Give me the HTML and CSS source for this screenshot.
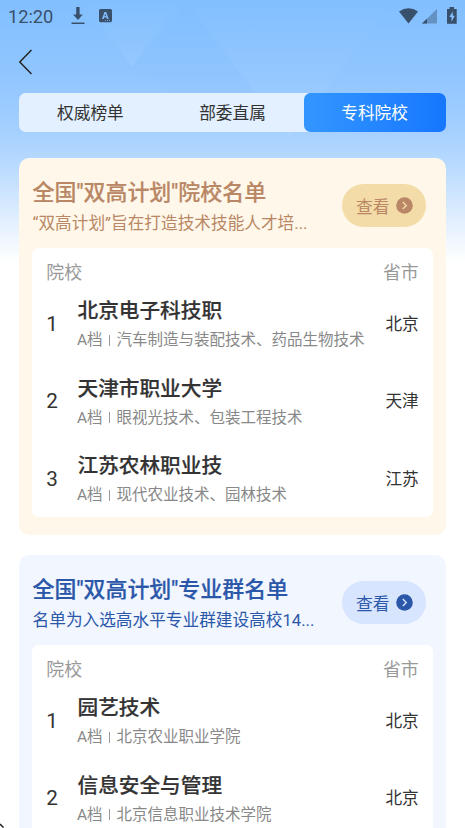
FILE: index.html
```html
<!DOCTYPE html>
<html lang="zh-CN">
<head>
<meta charset="utf-8">
<title>院校名单</title>
<link rel="stylesheet" href="styles.css">
</head>
<body>
<svg class="backdrop" width="465" height="262" viewBox="0 0 465 262" aria-hidden="true">
  <defs>
    <linearGradient id="sky" x1="0" y1="0" x2="0" y2="1">
      <stop offset="0" stop-color="#82bfff"/>
      <stop offset=".3" stop-color="#91c6ff"/>
      <stop offset=".5" stop-color="#a5d0ff"/>
      <stop offset=".65" stop-color="#bcdcff"/>
      <stop offset=".85" stop-color="#e3f0ff"/>
      <stop offset="1" stop-color="#fff"/>
    </linearGradient>
    <linearGradient id="peak" x1="0" y1="0" x2="0" y2="1">
      <stop offset="0" stop-color="#fff" stop-opacity="0"/>
      <stop offset="1" stop-color="#fff" stop-opacity=".06"/>
    </linearGradient>
    <linearGradient id="ridge" x1="0" y1="0" x2="0" y2="1">
      <stop offset="0" stop-color="#63a6f2" stop-opacity=".06"/>
      <stop offset="1" stop-color="#63a6f2" stop-opacity="0"/>
    </linearGradient>
  </defs>
  <rect width="465" height="262" fill="url(#sky)"/>
  <path d="M84 0H180L132 67Z" fill="url(#peak)"/>
  <path d="M187 3L289 137L240 137L132 67Z" fill="url(#ridge)"/>
  <path d="M187 3L289 137L393 0H187Z" fill="url(#peak)"/>
</svg>
<div class="page">
  <header class="status">
    <span class="clock">12:20</span>
    <svg class="download" width="14" height="18" viewBox="0 0 14 18"><path d="M5.2 0h3.400v7.500h3.200L7 13 2.100 7.500h3.100zM.5 15.500h13V17H.5z"/></svg>
    <svg class="app" width="13" height="14" viewBox="0 0 13 14"><path fill-rule="evenodd" d="M1.500 0h10Q13 0 13 1.500v10Q13 13.200 11.500 13.200h-10Q0 13.200 0 11.500v-10Q0 0 1.500 0zM5.500 3L3 10h1.600l.5-1.500h2.500L8.100 10h1.600L7.200 3zM5.500 7.200l.85-2.600.85 2.600zM6 11.200v.7h1v-.7zm2 0v.7h1v-.7zm2 0v.7h1v-.7z"/></svg>
    <svg class="signals" width="60" height="18" viewBox="0 0 60 18">
      <path d="M0 4.500Q9.500-2 19 4.500L9.500 16.500z"/>
      <path d="M38 2V16.500H23z" opacity=".42"/>
      <path d="M28 11.700V16.500H23z"/>
      <path fill-rule="evenodd" d="M50.500 0h4.500v2h2.700V16.800H48V2h2.500zM53.800 4.500L50.300 10h2.200v4.700l3.300-6h-2z"/>
    </svg>
  </header>
  <nav class="navbar"><svg width="14" height="26" viewBox="0 0 14 26"><path d="M12.500 1L.8 13L12.500 25"/></svg></nav>
  <div class="tabs"><span class="tab">权威榜单</span><span class="tab">部委直属</span><span class="tab active">专科院校</span></div>
  <main class="cards">
    <section class="card gold">
      <div class="head">
        <div class="intro"><h2>全国"双高计划"院校名单</h2><p>“双高计划”旨在打造技术技能人才培...</p></div>
        <a class="more">查看<svg width="17" height="17" viewBox="0 0 17 17"><circle cx="8.500" cy="8.500" r="8.300"/><path d="M6.800 4.900L10.300 8.500L6.800 12.100"/></svg></a>
      </div>
      <div class="list">
        <div class="cols"><span>院校</span><span>省市</span></div>
        <div class="row"><span class="rank">1</span><div class="info"><h3>北京电子科技职</h3><p>A档<i></i>汽车制造与装配技术、药品生物技术</p></div><span class="city">北京</span></div>
        <div class="row"><span class="rank">2</span><div class="info"><h3>天津市职业大学</h3><p>A档<i></i>眼视光技术、包装工程技术</p></div><span class="city">天津</span></div>
        <div class="row"><span class="rank">3</span><div class="info"><h3>江苏农林职业技</h3><p>A档<i></i>现代农业技术、园林技术</p></div><span class="city">江苏</span></div>
      </div>
    </section>
    <section class="card blue">
      <div class="head">
        <div class="intro"><h2>全国"双高计划"专业群名单</h2><p>名单为入选高水平专业群建设高校14...</p></div>
        <a class="more">查看<svg width="17" height="17" viewBox="0 0 17 17"><circle cx="8.500" cy="8.500" r="8.300"/><path d="M6.800 4.900L10.300 8.500L6.800 12.100"/></svg></a>
      </div>
      <div class="list">
        <div class="cols"><span>院校</span><span>省市</span></div>
        <div class="row"><span class="rank">1</span><div class="info"><h3>园艺技术</h3><p>A档<i></i>北京农业职业学院</p></div><span class="city">北京</span></div>
        <div class="row"><span class="rank">2</span><div class="info"><h3>信息安全与管理</h3><p>A档<i></i>北京信息职业技术学院</p></div><span class="city">北京</span></div>
      </div>
    </section>
  </main>
</div>
<svg class="pointer" width="4" height="5" viewBox="0 0 4 5" aria-hidden="true"><path d="M0 1L3.500 4.500"/></svg>
</body>
</html>
```
FILE: styles.css
```css
* { box-sizing: border-box; }
body {
  margin: 0;
  height: 828px;
  overflow: hidden;
  position: relative;
  background: #fff;
  color: #333;
  font-family: Roboto, "Noto Sans CJK SC", sans-serif;
}
h2, h3, p { margin: 0; white-space: nowrap; }
svg { display: block; flex: none; }
.backdrop { position: absolute; left: 0; top: 0; }
.page { position: relative; padding: 0 19.4px; }
.status {
  display: flex;
  align-items: flex-start;
  height: 42px;
  margin: 0 -19.4px;
  padding: 7px 6.5px 0 8px;
  color: #38506c;
  fill: #38506c;
}
.clock { width: 62.5px; font-size: 18.2px; line-height: 19px; }
.app { margin: 2px 0 0 14.5px; }
.signals { margin-left: auto; margin-top: -.5px; }
.navbar { height: 51px; padding-top: 7px; }
.navbar path { fill: none; stroke: #222; stroke-width: 1.4; }
.tabs { display: flex; height: 39px; border-radius: 6.5px; background: #e2f0ff; }
.tab {
  flex: 1;
  text-align: center;
  font-size: 16.67px;
  line-height: 39px;
  padding-top: 1px;
  height: 39px;
  border-radius: 6.5px;
}
.active { color: #fff; background: linear-gradient(90deg, #3396ff, #1677ff); }
.cards { display: flex; flex-direction: column; gap: 20px; padding-top: 26px; }
.card { border-radius: 10.3px; padding: 0 12.9px 18px; }
.head { display: flex; justify-content: space-between; height: 90px; }
.intro { padding: 19px 0 0 .3px; }
.intro h2 { font-size: 21.96px; line-height: 32px; font-weight: 500; -webkit-text-stroke: .2px currentColor; }
.intro p { font-size: 16.67px; line-height: 30px; }
.more {
  display: flex;
  align-items: center;
  justify-content: center;
  gap: 6px;
  width: 84px;
  height: 43px;
  margin: 26px 6.5px 0 0;
  border-radius: 22px;
  font-size: 16.8px;
}
.more circle { fill: currentColor; }
.more path { fill: none; stroke: var(--pill); stroke-width: 1.4; }
.gold { --pill: #f3dca8; background: #fff8ea; color: #b98765; }
.blue { --pill: #d8e5ff; background: #f1f6ff; color: #2b57a9; }
.more { background: var(--pill); }
.list { border-radius: 6.5px; background: #fff; color: #333; padding: 0 14px; }
.cols {
  display: flex;
  justify-content: space-between;
  height: 36.5px;
  padding-top: 11px;
  line-height: 27px;
  font-size: 17.9px;
  color: #999;
}
.row { display: flex; align-items: center; height: 77.5px; }
.rank { width: 31.2px; padding-top: 1px; font-size: 20.67px; }
.info { flex: 1; padding-top: 3.4px; }
.info h3 { font-size: 20.67px; line-height: 31px; font-weight: 500; -webkit-text-stroke: .2px currentColor; }
.info p { display: flex; align-items: center; margin-left: -.5px; font-size: 15.5px; line-height: 26px; color: #888; }
.info i { width: 1px; height: 11px; margin: 0 7px 0 6px; background: #999; }
.city { font-size: 16.67px; padding-bottom: .6px; }
.pointer { position: absolute; left: 0; bottom: 0; }
.pointer path { fill: none; stroke: #111; stroke-width: 1.3; }
```
